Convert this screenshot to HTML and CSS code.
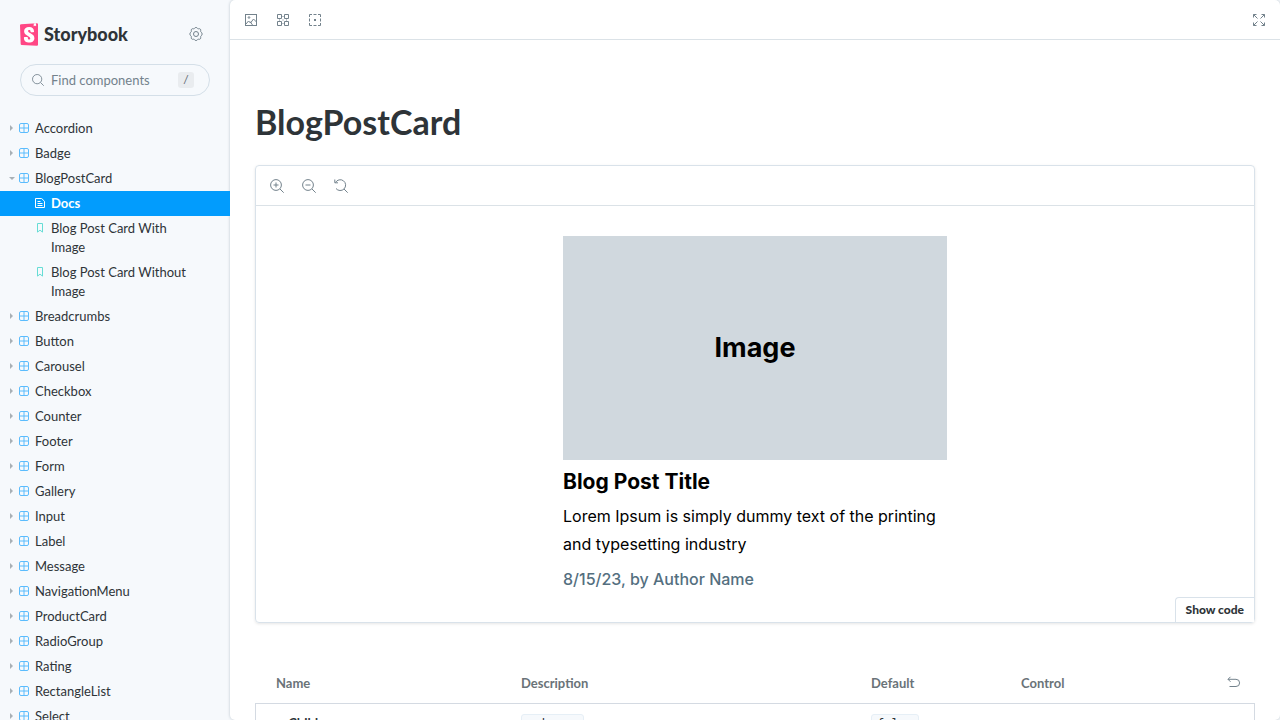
FILE: index.html
```html
<!DOCTYPE html>
<html lang="en">
<head>
<meta charset="utf-8">
<title>BlogPostCard - Docs</title>
<link rel="stylesheet" href="styles.css">
</head>
<body>
<svg class="sprite" aria-hidden="true">
  <symbol id="component" viewBox="0 0 10 10"><rect x=".5" y=".5" width="9" height="9" rx="1.500" fill="none" stroke="currentColor"/><path d="M5 1v8M1 5h8" fill="none" stroke="currentColor"/></symbol>
  <symbol id="bookmark" viewBox="0 0 10 10"><path d="M2.500.5h5v8.600L5 7.200 2.500 9.100z" fill="none" stroke="currentColor"/></symbol>
  <symbol id="document" viewBox="0 0 10 10"><path d="M.5.5h6.200l2.800 2.800v6.200h-9zM2.500 3.500h3M2.500 5.500h5M2.500 7.500h5" fill="none" stroke="currentColor"/></symbol>
</svg>
<div class="app">
  <aside class="sidebar">
    <header class="brand">
      <a class="logo" href="#"><svg viewBox="0 0 32 40" width="18" height="23" aria-hidden="true"><path fill="#ff4785" d="M1.200 36.700 0 3.900c0-1.100.8-2 1.900-2.100L29.900 0A2 2 0 0 1 32 2.100V38a2 2 0 0 1-2.100 2L3.200 38.800a2 2 0 0 1-2-2z"/><path fill="#fff" d="m24.300 5.100.2-4.800L28.500 0l.2 5c0 .2-.2.300-.4.200l-1.600-1.300-1.900 1.500c-.2.100-.5 0-.5-.3zM18.900 15.500c0 .8 5.400.4 6.100-.1 0-5.800-3.100-8.900-8.800-8.900S7.300 9.600 7.300 14.200c0 8.100 10.900 8.300 10.900 12.700 0 1.200-.6 2-2 2-1.700 0-2.400-.9-2.300-4 0-.6-6.700-.9-6.900 0-.5 7.300 4.100 9.500 9.400 9.500 5.200 0 9.200-2.800 9.200-7.700 0-8.800-11.300-8.600-11.300-12.900 0-1.800 1.300-2 2.100-2 .9 0 2.500.1 2.500 3.700z"/></svg><span>Storybook</span></a>
      <button class="settings" aria-label="Settings"><svg class="line" viewBox="0 0 14 14" width="14" height="14"><path d="M5.600 1.300C6 .2 8 .2 8.400 1.300c.2.500.8.700 1.300.5 1.100-.6 2.500.8 2 1.900-.2.600 0 1.200.5 1.500 1.200.5 1.200 3.100 0 3.600-.5.300-.7.900-.5 1.500.5 1.100-.9 2.500-2 1.900-.5-.2-1.100 0-1.300.5-.4 1.100-2.400 1.100-2.800 0-.2-.5-.8-.7-1.300-.5-1.100.6-2.500-.8-2-1.900.2-.6 0-1.200-.5-1.500-1.200-.5-1.200-3.100 0-3.600.5-.3.700-.9.500-1.500-.5-1.100.9-2.500 2-1.900.5.200 1.100 0 1.300-.5z"/><circle cx="7" cy="7" r="2.500"/></svg></button>
    </header>
    <div class="search">
      <svg class="line" viewBox="0 0 14 14" width="12" height="12" aria-hidden="true"><circle cx="6" cy="6" r="5.400"/><path d="m10 10 3.700 3.700"/></svg>
      <input type="text" aria-label="Find components" placeholder="Find components">
      <kbd>/</kbd>
    </div>
    <nav id="tree" class="tree" aria-label="Components"></nav>
  </aside>
  <main class="main">
    <div class="toolbar">
      <button aria-label="Change background"><svg class="line" viewBox="0 0 14 14" width="14" height="14"><rect x="1.500" y="1.500" width="11" height="11"/><path d="m2 11 2.500-3 2 2L9.500 6 12.500 9M6 8.500 8.500 12"/><circle cx="5" cy="4.500" r=".8"/></svg></button>
      <button aria-label="Apply grid"><svg class="line" viewBox="0 0 14 14" width="14" height="14"><path d="M1.500 1.500h4v4h-4zM8.500 1.500h4v4h-4zM1.500 8.500h4v4h-4zM8.500 8.500h4v4h-4z"/><path class="faint" d="M6 3.500h2M6 10.500h2M3.500 6v2M10.500 6v2M6 7h2"/></svg></button>
      <button aria-label="Outline"><svg class="line" viewBox="0 0 14 14" width="14" height="14"><path d="M1.500 4V1.500H4M5.500 1.500h3M10 1.500h2.500V4M12.500 5.500v3M12.500 10v2.500H10M8.500 12.500h-3M4 12.500H1.500V10M1.500 8.500v-3"/><path class="dot" d="M6 7h2"/></svg></button>
      <button class="push" aria-label="Go full screen"><svg class="line" viewBox="0 0 14 14" width="14" height="14"><path d="M1.500 4.500v-3h3M1.500 1.500l4 4M9.500 1.500h3v3M12.500 1.500l-4 4M1.500 9.500v3h3M1.500 12.500l4-4M12.500 9.500v3h-3M12.500 12.500l-4-4"/></svg></button>
    </div>
    <div class="docs">
      <h1>BlogPostCard</h1>
      <section class="preview">
        <div class="toolbar">
          <button aria-label="Zoom in"><svg class="line" viewBox="0 0 14 14" width="14" height="14"><circle cx="6" cy="6" r="5.400"/><path d="m10 10 3.700 3.700M3.500 6h5M6 3.500v5"/></svg></button>
          <button aria-label="Zoom out"><svg class="line" viewBox="0 0 14 14" width="14" height="14"><circle cx="6" cy="6" r="5.400"/><path d="m10 10 3.700 3.700M3.500 6h5"/></svg></button>
          <button aria-label="Reset zoom"><svg class="line" viewBox="0 0 14 14" width="14" height="14"><path d="M1.500 3.500A5.400 5.400 0 1 1 2 9.500M.8.500v3.300H4M10 10l3.700 3.700"/></svg></button>
        </div>
        <article class="card">
          <div class="picture">Image</div>
          <h2>Blog Post Title</h2>
          <p>Lorem Ipsum is simply dummy text of the printing and typesetting industry</p>
          <p class="meta">8/15/23, by Author Name</p>
        </article>
        <button class="show-code">Show code</button>
      </section>
      <table class="args">
        <thead><tr><th class="name">Name</th><th class="description">Description</th><th class="default">Default</th><th><div class="control">Control <button aria-label="Reset controls"><svg class="line" viewBox="0 0 14 14" width="14" height="14"><path d="M3.500.8 1 3.300l2.500 2.500M1 3.300h8a3.600 3.600 0 0 1 0 7.200H2.500"/></svg></button></div></th></tr></thead>
        <tbody><tr><td>asChild</td><td><code>unknown</code></td><td><code>false</code></td><td></td></tr></tbody>
      </table>
    </div>
  </main>
</div>
<script src="tree.js"></script>
</body>
</html>
```
FILE: tree.js
```js
const names = ["Accordion", "Badge", "BlogPostCard", "Breadcrumbs", "Button", "Carousel", "Checkbox", "Counter", "Footer", "Form", "Gallery", "Input", "Label", "Message", "NavigationMenu", "ProductCard", "RadioGroup", "Rating", "RectangleList", "Select"];
const children = [["document", "Docs"], ["bookmark", "Blog Post Card With Image"], ["bookmark", "Blog Post Card Without Image"]];
const icon = (id) => `<svg class="${id}" width="10" height="10" aria-hidden="true"><use href="#${id}"/></svg>`;
document.getElementById("tree").innerHTML = names.map((name) => {
  const open = name === "BlogPostCard";
  const row = `<button class="row" aria-expanded="${open}"><span class="arrow"></span>${icon("component")}<span>${name}</span></button>`;
  return row + (open ? children.map(([id, text]) => `<a class="row child${id === "document" ? " selected" : ""}" href="#">${icon(id)}<span>${text}</span></a>`).join("") : "");
}).join("");
```
FILE: styles.css
```css
* { box-sizing: border-box; }
body { margin: 0; background: #f6f9fc; color: #2e3438; font: 13px/19px Lato, "Open Sans", sans-serif; }
button { border: 0; padding: 0; background: none; font: inherit; color: inherit; text-align: left; cursor: pointer; }
a { color: inherit; text-decoration: none; }
h1, h2, p { margin: 0; }
svg { display: block; flex: none; }
.sprite { position: absolute; width: 0; height: 0; }
.line { fill: none; stroke: #73828c; stroke-width: 1; }
.line .faint { stroke: #b9c1c8; }
.line .dot { stroke-width: 2; }
.app { display: grid; grid-template-columns: 230px minmax(0, 1fr); height: 100vh; overflow: hidden; }

.sidebar { overflow: hidden; }
.brand { display: flex; align-items: center; justify-content: space-between; padding: 20px 27px 0 20px; height: 48px; }
.logo { display: flex; align-items: center; gap: 6px; font-size: 18px; line-height: 24px; font-weight: 900; }
.search { display: flex; align-items: center; gap: 7px; height: 32px; margin: 16px 20px 20px; padding: 0 15px 0 11px; border: 1px solid #d4dfe8; border-radius: 16px; }
.search input { flex: 1; min-width: 0; border: 0; padding: 0; background: none; font: inherit; outline: 0; }
.search input::placeholder { color: #73828c; opacity: 1; }
.search kbd { width: 16px; height: 16px; border-radius: 3px; background: #e9ecef; color: #5c6870; font: 12px/16px Lato, sans-serif; text-align: center; }
.row { display: flex; align-items: flex-start; width: 100%; padding: 3px 32px 3px 10px; gap: 6px; }
.row svg { margin-top: 4px; }
.component { color: #5bbcfd; }
.arrow { width: 3px; margin-top: 6px; border: solid transparent; border-width: 3px 0 3px 3px; border-left-color: #a8b0b5; }
[aria-expanded="true"] .arrow { width: 6px; margin: 8px -2px 0 -1px; border-width: 3px 3px 0; border-top-color: #a8b0b5; border-left-color: transparent; }
.row.child { padding-left: 35px; }
.bookmark { color: #66ddd5; }
.row.selected { position: relative; z-index: 1; background: #029cfd; color: #fff; font-weight: 700; }
.document { color: #fff; }

.main { overflow: hidden; background: #fff; border-radius: 5px; box-shadow: 0 0 3px #b9c3cb; }
.toolbar { display: flex; align-items: center; gap: 18px; height: 40px; padding: 0 14px; border-bottom: 1px solid #dbe2e7; }
.push { margin-left: auto; }
.docs { padding: 64px 25px 0; }
h1 { margin-bottom: 25px; font-size: 34px; line-height: 36px; font-weight: 700; }
.preview { position: relative; border: 1px solid #d9e2ea; border-radius: 4px; box-shadow: 0 1px 3px #0000001a; }
.card { max-width: 384px; margin: 30px auto 29px; color: #000; font: 16px/28px Inter, sans-serif; font-optical-sizing: none; }
.picture { display: grid; place-items: center; aspect-ratio: 12 / 7; margin-bottom: 8px; background: #d0d8de; font-size: 27px; font-weight: 700; }
.card h2 { margin-bottom: 6px; font-size: 21px; line-height: 28px; font-weight: 700; }
.card .meta { margin-top: 7px; color: #546f7f; font-weight: 500; }
.show-code { position: absolute; right: 0; bottom: 0; height: 25px; padding: 0 10px; border: solid #d9e2ea; border-width: 1px 0 0 1px; border-radius: 4px 0 0; background: #fff; font-size: 12px; line-height: 16px; font-weight: 900; }

.args { width: 100%; margin-top: 40px; border-collapse: separate; border-spacing: 0; table-layout: fixed; text-align: left; }
.args th { height: 40px; padding: 0 0 0 15px; color: #6a7378; font-weight: 700; }
.args th.name { width: 251px; padding-left: 21px; }
.args .description { width: 350px; }
.args .default { width: 150px; }
.control { display: flex; align-items: center; justify-content: space-between; padding-right: 14px; }
.args td { padding: 10px 15px; border-top: 1px solid #d4dae2; vertical-align: top; }
.args td:first-child { padding-left: 20px; border-left: 1px solid #d4dae2; font-weight: 700; }
.args td:last-child { border-right: 1px solid #d4dae2; }
.args code { display: block; width: fit-content; padding: 0 5px; border: 1px solid #e6eff6; border-radius: 3px; background: #f6f9fc; font: 12px/18px "DejaVu Sans Mono", monospace; }
```
